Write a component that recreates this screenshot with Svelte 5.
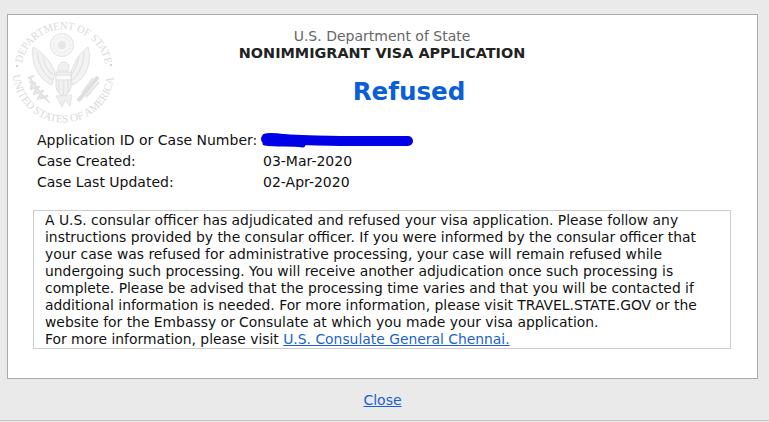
<script>
    let rows = [
        { label: 'Case Created:', value: '03-Mar-2020' },
        { label: 'Case Last Updated:', value: '02-Apr-2020' }
    ];
</script>

<div class="page">
    <div class="card">
        <svg class="seal" width="110" height="112" viewBox="9 17 110 112" aria-hidden="true">
            <defs>
                <path id="arc-top" d="M21.9 63.2 A42.5 42.5 0 0 1 105.1 63.2" />
                <path id="arc-bottom" d="M13 75 A50.6 50.6 0 0 0 114 75" />
            </defs>
            <text class="seal-text"><textPath href="#arc-top" textLength="117" lengthAdjust="spacingAndGlyphs">DEPARTMENT OF STATE</textPath></text>
            <text class="seal-text"><textPath href="#arc-bottom" textLength="150" lengthAdjust="spacingAndGlyphs">UNITED STATES OF AMERICA</textPath></text>
            <circle cx="17" cy="66" r="1.2" fill="#d4d4d4" />
            <circle cx="111" cy="65" r="1.2" fill="#d4d4d4" />

            <!-- glory and stars -->
            <circle cx="62" cy="45" r="11.5" fill="#f7f7f7" stroke="#e2e2e2" />
            <circle cx="62" cy="45" r="8" fill="none" stroke="#ececec" stroke-width="2" stroke-dasharray="1.5 1.5" />
            <circle cx="62" cy="45" r="4" fill="#e6e6e6" />

            <!-- wings -->
            <path d="M55 72 C50 60 42 52 33 47 C31 60 36 78 52 85 Z" fill="#f3f3f3" stroke="#e2e2e2" />
            <path d="M71 72 C75 60 80 53 88 47 C92 60 88 78 72 85 Z" fill="#f3f3f3" stroke="#e2e2e2" />
            <path d="M37 52 C38 62 43 74 52 80 M43 56 C44 63 47 70 53 75 M84 52 C84 62 80 74 72 80 M79 56 C78 63 75 70 71 75" fill="none" stroke="#e4e4e4" stroke-width="1.5" />

            <!-- head -->
            <path d="M58 71 C57 65 61 61 65 62 C69 63 70 67 68 71 Z" fill="#f0f0f0" stroke="#e2e2e2" />

            <!-- shield -->
            <path d="M56 72 H71 V86 C71 92 66 95 63.5 96 C61 95 56 92 56 86 Z" fill="#f1f1f1" stroke="#dedede" />
            <rect x="56" y="75" width="15" height="5" fill="#fafafa" stroke="#e0e0e0" />
            <path d="M59 81 V92 M63.5 81 V95 M68 81 V92" stroke="#e4e4e4" stroke-width="1.5" fill="none" />

            <!-- tail -->
            <path d="M56 96 L62 107 L65 100 L70 106 L72 95 Z" fill="#efefef" stroke="#e4e4e4" />

            <!-- olive branch -->
            <path d="M30 78 C35 86 42 96 50 103" fill="none" stroke="#dedede" stroke-width="1.5" />
            <path d="M30 82 L35 83 M33 88 L39 87 M37 93 L43 91 M41 98 L47 96 M29 78 L33 76 M32 84 L31 89 M36 90 L34 94 M40 95 L38 99" stroke="#e2e2e2" stroke-width="2.5" stroke-linecap="round" fill="none" />

            <!-- arrows -->
            <path d="M98 77 C92 84 86 92 78 101" fill="none" stroke="#dedede" stroke-width="4" />
            <path d="M93 78 L82 93 M99 82 L86 97" fill="none" stroke="#e4e4e4" stroke-width="2" />
        </svg>

        <div class="heading">
            <div class="dept">U.S. Department of State</div>
            <div class="app-title">NONIMMIGRANT VISA APPLICATION</div>
        </div>
        <div class="status">Refused</div>

        <div class="details">
            <div class="row">
                <span class="label">Application ID or Case Number:</span>
                <span class="value case-id">
                    <svg class="scribble" width="156" height="20" viewBox="0 0 156 20" aria-hidden="true">
                        <path d="M7 9 C30 9 60 11 90 11 C110 11 130 11 149 11" fill="none" stroke="#0000e6" stroke-width="10" stroke-linecap="round" />
                        <path d="M6 6 C12 4 20 6 34 8 M6 13 C20 15 30 13 44 15" fill="none" stroke="#0000e6" stroke-width="5" stroke-linecap="round" />
                    </svg>
                </span>
            </div>
            {#each rows as row}
                <div class="row">
                    <span class="label">{row.label}</span>
                    <span class="value">{row.value}</span>
                </div>
            {/each}
        </div>

        <div class="message">
            A U.S. consular officer has adjudicated and refused your visa application. Please follow any instructions provided by the consular officer. If you were informed by the consular officer that your case was refused for administrative processing, your case will remain refused while undergoing such processing. You will receive another adjudication once such processing is complete. Please be advised that the processing time varies and that you will be contacted if additional information is needed. For more information, please visit TRAVEL.STATE.GOV or the website for the Embassy or Consulate at which you made your visa application.<br />
            For more information, please visit <a href="#consulate">U.S. Consulate General Chennai.</a>
        </div>
    </div>

    <div class="footer"><a href="#close">Close</a></div>
</div>

<style>
    :global(body) {
        margin: 0;
        background: #eaeaea;
    }

    .page {
        height: 421px;
        box-sizing: border-box;
        padding: 14px 11px 0 7px;
        border-bottom: 1px solid #c4c4c4;
        font-family: "DejaVu Sans", Verdana, sans-serif;
        font-size: 14px;
        color: #111;
    }

    .card {
        position: relative;
        height: 365px;
        box-sizing: border-box;
        background: #fff;
        border: 1px solid #aaa;
        padding: 13px 26px 0 25px;
    }

    .seal {
        position: absolute;
        left: 1px;
        top: 2px;
    }

    .seal-text {
        font-family: "Liberation Serif", serif;
        font-size: 11px;
        fill: #dadada;
    }

    .heading {
        text-align: center;
        line-height: 17px;
    }

    .dept {
        color: #666;
    }

    .app-title {
        font-size: 14.4px;
        font-weight: bold;
        color: #222;
    }

    .status {
        margin-top: 15px;
        padding-left: 54px;
        text-align: center;
        font-size: 24.6px;
        font-weight: bold;
        line-height: 30px;
        color: #0a5fd8;
    }

    .details {
        margin-top: 23px;
        padding-left: 4px;
    }

    .row {
        display: flex;
        height: 21px;
        line-height: 21px;
    }

    .label {
        width: 226px;
        flex: none;
        white-space: nowrap;
    }

    .case-id {
        position: relative;
    }

    .scribble {
        position: absolute;
        left: -4px;
        top: 0;
    }

    .message {
        margin-top: 17px;
        box-sizing: border-box;
        height: 139px;
        border: 1px solid #ccc;
        padding: 1px 10px 0 11px;
        font-size: 13.88px;
        line-height: 17px;
    }

    a {
        color: #1a5fd0;
    }

    .footer {
        margin-top: 13px;
        text-align: center;
        font-size: 14px;
        line-height: 17px;
    }
</style>
